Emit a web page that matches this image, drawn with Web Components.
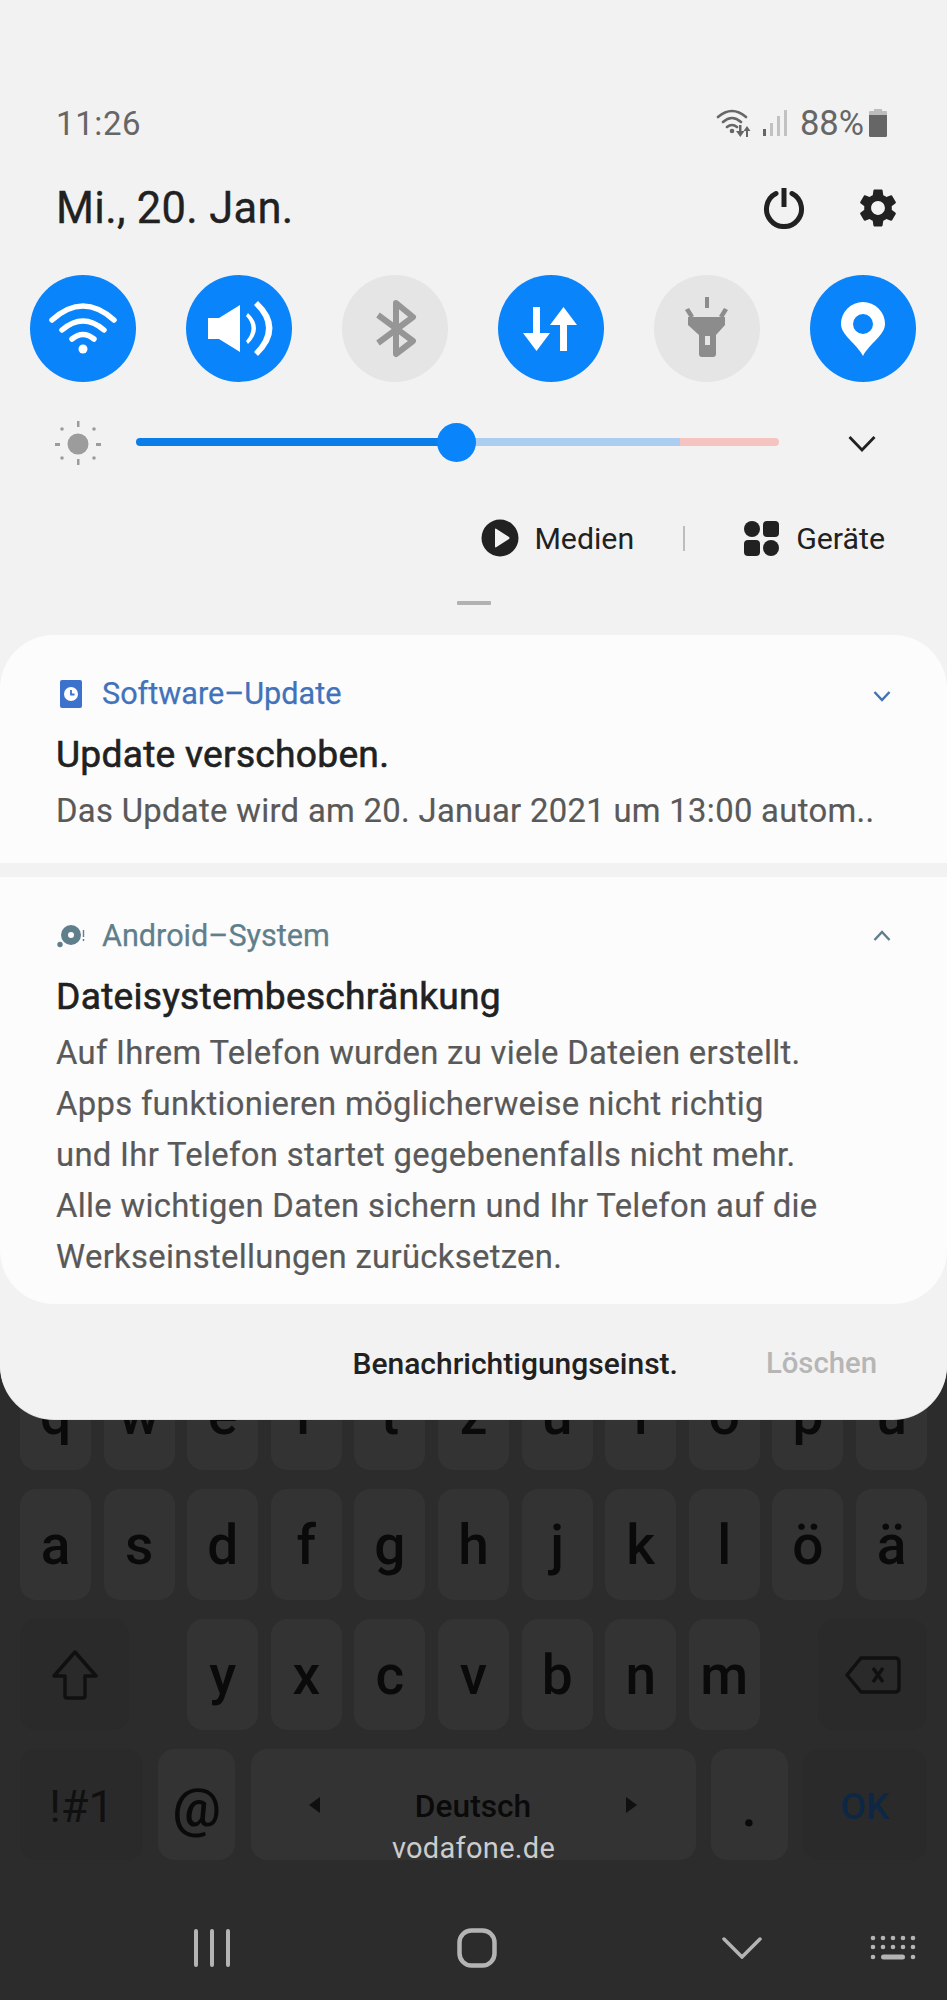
<!DOCTYPE html>
<html lang="de"><head><meta charset="utf-8"><title>Schnelleinstellungen</title>
<style>
html,body{margin:0;padding:0;background:#2c2c2c}
body{font-family:Roboto,"Liberation Sans",sans-serif;width:947px;height:2000px;overflow:hidden}
</style></head><body>
<phone-screen>
  <keyboard-area slot="back"></keyboard-area>
  <quick-panel slot="front">
    <status-bar></status-bar>
    <date-row></date-row>
    <tile-row>
      <qs-tile on><svg viewBox="0 0 106 106" fill="none" stroke="#fff" stroke-width="5.5" stroke-linecap="round"><path d="M22 45Q53 17 84 45M32 55Q53 37 74 55M42 64Q53 55 64 64"/><circle cx="53" cy="74" r="4.5" fill="#fff" stroke="none"/></svg></qs-tile>
      <qs-tile on><svg viewBox="0 0 106 106" fill="#fff"><path d="M22 43H33L54 30V77L33 64H22Z"/><path d="M60 41Q71 53 60 66L62 69Q78 53 62 38Z"/><path d="M68 30Q92 53 68 77L72 81Q101 53 72 26Z"/></svg></qs-tile>
      <qs-tile><svg viewBox="0 0 106 106" fill="none" stroke="#969696" stroke-width="6" stroke-linejoin="round"><path d="M36 40L71 66L54 79V28L71 42L36 68"/></svg></qs-tile>
      <qs-tile on><svg viewBox="0 0 106 106" fill="#fff"><path d="M35 32h7v26h10L38.500 76L25 58h10Z"/><path d="M62 76h7V50h10L65.500 32L52 50h10Z"/></svg></qs-tile>
      <qs-tile><svg viewBox="0 0 106 106" fill="#8c8c8c"><path fill-rule="evenodd" d="M34 42H71V50L62 60V79Q62 82 59 82H48Q45 82 45 79V60L34 50ZM51 61V70H56V61Z"/><path d="M51 22H55V33H51ZM31 35L35 33L40 41L36 43ZM74 35L70 33L65 41L69 43Z"/></svg></qs-tile>
      <qs-tile on><svg viewBox="0 0 106 106" fill="#fff"><path fill-rule="evenodd" d="M53 81C46 68 31 60 31 49A22 22 0 0 1 75 49C75 60 60 68 53 81ZM53 39A10 10 0 1 0 53 59A10 10 0 1 0 53 39Z"/></svg></qs-tile>
    </tile-row>
    <brightness-row></brightness-row>
    <media-row></media-row>
    <drag-handle></drag-handle>
    <notify-card collapsed app="Software–Update" tone="#4172ba" title="Update verschoben.">
      <svg slot="icon" viewBox="0 0 24 28" width="24" height="28"><rect x="1" y="0" width="22" height="28" rx="2" fill="#3c72cc"/><circle cx="12" cy="14" r="7" fill="#fff"/><path d="M12 10V14.500H15.500" fill="none" stroke="#3c72cc" stroke-width="1.800"/></svg>
      <svg slot="chev" style="margin-top:4px" viewBox="0 0 18 12" width="18" height="12" fill="none" stroke="#4172ba" stroke-width="2.500"><path d="M1.500 2L9 10L16.500 2"/></svg>
      Das Update wird am 20. Januar 2021 um 13:00 autom..
    </notify-card>
    <notify-card app="Android–System" tone="#5f7f8c" title="Dateisystembeschränkung">
      <svg slot="icon" viewBox="0 0 32 24" width="32" height="24"><path fill="#5f7f8c" fill-rule="evenodd" d="M15 1A10 10 0 1 0 15 21A10 10 0 1 0 15 1ZM15 8A3 3 0 1 1 15 14A3 3 0 1 1 15 8Z"/><circle cx="4" cy="20.500" r="2.700" fill="#5f7f8c"/><path d="M27.500 6V13M27.500 15V17" stroke="#5f7f8c" stroke-width="1.400"/></svg>
      <svg slot="chev" viewBox="0 0 18 12" width="18" height="12" fill="none" stroke="#5f7f8c" stroke-width="2.500"><path d="M1.500 10L9 2L16.500 10"/></svg>
      Auf Ihrem Telefon wurden zu viele Dateien erstellt.<br>Apps funktionieren möglicherweise nicht richtig<br>und Ihr Telefon startet gegebenenfalls nicht mehr.<br>Alle wichtigen Daten sichern und Ihr Telefon auf die<br>Werkseinstellungen zurücksetzen.
    </notify-card>
    <panel-footer></panel-footer>
  </quick-panel>
</phone-screen>
<script>
function el(name, css, html, after){
  customElements.define(name, class extends HTMLElement{
    connectedCallback(){
      if(this.shadowRoot) return;
      const r=this.attachShadow({mode:'open'});
      r.innerHTML='<style>'+css+'</style>'+(typeof html==='function'?html(this):html);
      if(after) after(r,this);
    }
  });
}
el('phone-screen',`:host{display:grid;width:947px;height:2000px;background:#2c2c2c;color:#212121;overflow:hidden}
 ::slotted(*){grid-area:1/1}`,`<slot name="back"></slot><slot name="front"></slot>`);

el('quick-panel',`:host{display:flex;flex-direction:column;align-self:start;z-index:1;height:1419px;background:#f2f2f2;border-radius:0 0 54px 54px;overflow:hidden;box-shadow:0 1px 0 #e4e4e4}`,`<slot></slot>`);

el('status-bar',`:host{display:flex;align-items:center;height:40px;margin:103px 0 0;padding:0 60px 0 56px;color:#666;font-size:33px}
 .t{flex:1;letter-spacing:.6px}.p{margin:0 5px 0 13px;font-size:34.500px}svg{display:block}`,
 `<span class="t">11:26</span>
 <svg width="38" height="30" viewBox="0 0 38 30" fill="none" stroke="#666" stroke-width="2.600" stroke-linecap="round"><path d="M2 9Q16 -3 30 9M7 14Q16 6 25 14M11 19Q16 15 21 19"/><circle cx="16" cy="23" r="2.300" fill="#666" stroke="none"/><path fill="#666" stroke="none" d="M23 17h2.500v6h3l-4.200 6l-4.300-6h3ZM32 29h-2v-6h-2.500l3.500-5l3.500 5h-2.500Z"/></svg>
 <svg style="margin-left:9px" width="24" height="28" viewBox="0 0 24 28"><rect x="0" y="20" width="3" height="7" fill="#666"/><rect x="7" y="14" width="3" height="13" fill="#c2c2c2"/><rect x="14" y="7" width="3" height="20" fill="#c2c2c2"/><rect x="21" y="1" width="3" height="26" fill="#c2c2c2"/></svg>
 <span class="p">88%</span>
 <svg width="18" height="28" viewBox="0 0 18 28"><path d="M5 0H13V2H17Q18 2 18 3V6H0V3Q0 2 1 2H5Z" fill="#bdbdbd"/><path d="M0 6H18V26.500Q18 28 16.500 28H1.500Q0 28 0 26.500Z" fill="#666"/></svg>`);

el('date-row',`:host{display:flex;align-items:center;height:60px;margin-top:35px;padding:0 46px 0 56px;font-size:43.500px;color:#212121}
 .d{flex:1;letter-spacing:.3px;-webkit-text-stroke:.35px #212121}svg{display:block}`,
 `<span class="d">Mi., 20. Jan.</span>
 <svg width="42" height="42" viewBox="0 0 42 42" fill="none" stroke="#212121" stroke-width="5"><path d="M13 6.500A17.500 17.500 0 1 0 29 6.500" stroke-linecap="round"/><path d="M21 1V20"/></svg>
 <svg style="margin-left:50px" width="46" height="46" viewBox="0 0 24 24" fill="#212121"><path d="M19.140 12.940c.04-.3.06-.61.06-.94 0-.32-.02-.64-.07-.94l2.030-1.580a.49.49 0 0 0 .12-.61l-1.920-3.320a.488.488 0 0 0-.59-.22l-2.390.96c-.5-.38-1.030-.7-1.620-.94l-.36-2.540a.484.484 0 0 0-.48-.41h-3.840c-.24 0-.43.17-.47.41l-.36 2.540c-.59.24-1.130.57-1.620.94l-2.390-.96c-.22-.08-.47 0-.59.22L2.740 8.870c-.12.21-.08.47.12.61l2.030 1.580c-.05.3-.09.63-.09.94s.02.64.07.94l-2.030 1.580a.49.49 0 0 0-.12.61l1.920 3.320c.12.22.37.29.59.22l2.390-.96c.5.38 1.030.7 1.620.94l.36 2.540c.05.24.24.41.48.41h3.840c.24 0 .44-.17.47-.41l.36-2.540c.59-.24 1.130-.56 1.620-.94l2.390.96c.22.08.47 0 .59-.22l1.920-3.320c.12-.22.07-.47-.12-.61l-2.010-1.580zM12 15.600c-1.980 0-3.600-1.620-3.600-3.600s1.620-3.600 3.600-3.600 3.600 1.620 3.600 3.600-1.620 3.600-3.600 3.600z"/></svg>`);

el('tile-row',`:host{display:flex;justify-content:space-between;margin-top:37px;padding:0 31px 0 30px}`,`<slot></slot>`);
el('qs-tile',`:host{display:block;width:106px;height:107px;border-radius:50%;background:#e5e5e5}
 :host([on]){background:#0a84fa} ::slotted(svg){display:block;width:106px;height:106px}`,`<slot></slot>`);

el('brightness-row',`:host{display:flex;align-items:center;height:40px;margin-top:40px;padding:0 71px 0 55px}
 svg{display:block}.track{display:flex;align-items:center;width:643px;height:8px;margin-left:35px;border-radius:4px;position:relative}
 .a{width:320px;height:8px;background:#0a7de8;border-radius:4px 0 0 4px}.b{width:224px;height:8px;background:#abcdf0}.c{flex:1;height:8px;background:#f5c4c1;border-radius:0 4px 4px 0}
 .th{position:absolute;left:301px;top:-15px;width:39px;height:39px;border-radius:50%;background:#0a84fa}.ch{margin-left:auto;margin-top:2px}`,
 `<svg width="46" height="46" viewBox="0 0 46 46" fill="#9c9c9c"><circle cx="23" cy="25" r="10.500"/><rect x="22" y="2" width="2.500" height="6"/><rect x="22" y="40" width="2.500" height="6"/><rect x="0" y="24" width="5" height="3"/><rect x="41" y="24" width="5" height="3"/><circle cx="7" cy="10" r="1.800"/><circle cx="39" cy="10" r="1.800"/><circle cx="7" cy="39" r="1.800"/><circle cx="39" cy="39" r="1.800"/></svg>
 <div class="track"><div class="a"></div><div class="b"></div><div class="c"></div><div class="th"></div></div>
 <svg class="ch" width="28" height="17" viewBox="0 0 28 17" fill="none" stroke="#212121" stroke-width="2.800"><path d="M1.500 2L14 15L26.500 2"/></svg>`);

el('media-row',`:host{display:flex;align-items:center;justify-content:flex-end;height:40px;margin-top:56px;padding-right:62px;font-size:30.300px;color:#212121}
 svg{display:block}.l{margin-left:17px}.m{margin-left:15px}.sep{width:2px;height:25px;background:#bdbdbd;margin:0 59px 0 49px}`,
 `<svg width="38" height="38" viewBox="0 0 38 38"><circle cx="19" cy="19" r="18.500" fill="#212121"/><path d="M14 10.500Q14 9 15.500 10L28 18Q29 19 28 20L15.500 28Q14 29 14 27.500Z" fill="#f2f2f2"/></svg>
 <span class="m">Medien</span><span class="sep"></span>
 <svg width="35" height="35" viewBox="0 0 35 35" fill="#212121"><circle cx="8" cy="8" r="8"/><rect x="19" y="0" width="16" height="16" rx="4"/><rect x="0" y="19" width="16" height="16" rx="4"/><circle cx="27" cy="27" r="8"/></svg>
 <span class="l">Geräte</span>`);

el('drag-handle',`:host{display:block;width:34px;height:4px;margin:43px auto 0;background:#b2b2b2;border-radius:1px}`,``);

customElements.define('notify-card',class extends HTMLElement{
  connectedCallback(){
    if(this.shadowRoot)return;
    const r=this.attachShadow({mode:'open'});
    const c=this.hasAttribute('collapsed');
    r.innerHTML=`<style>:host{display:block;background:#fcfcfc;padding:37px 56px ${c?26:21}px 56px;margin-top:${c?30:14}px;border-radius:${c?'54px 54px 0 0':'0 0 54px 54px'}}
    .h{display:flex;align-items:center;height:43px;color:${this.getAttribute('tone')};font-size:30.600px;-webkit-text-stroke:.25px ${this.getAttribute('tone')}}
    .i{display:flex;align-items:center}.i ::slotted(svg){display:block}.i{margin-left:${c?3:0}px;width:${c?43:46}px}
    .a{flex:1}.c ::slotted(svg){display:block}
    .t{margin-top:14px;height:50px;line-height:50px;font-size:37.200px;letter-spacing:.25px;color:#212121;-webkit-text-stroke:.6px #212121}
    .b{margin-top:7px;font-size:32.800px;letter-spacing:.32px;line-height:51px;color:#595959;white-space:nowrap;-webkit-text-stroke:.2px #595959}</style>
    <div class="h"><span class="i"><slot name="icon"></slot></span><span class="a">${this.getAttribute('app')}</span><span class="c"><slot name="chev"></slot></span></div>
    <div class="t">${this.getAttribute('title')}</div><div class="b"><slot></slot></div>`;
  }
});

el('panel-footer',`:host{display:flex;justify-content:flex-end;align-items:center;height:115px;padding:3px 70px 0 0;font-weight:500;box-sizing:border-box}
 .n{color:#212121;margin-right:88px;font-size:30px}.l{color:#b6b6b6;font-size:29.300px}`,`<span class="n">Benachrichtigungseinst.</span><span class="l">Löschen</span>`);

/* keyboard */
el('kb-key',`:host{display:flex;align-items:center;justify-content:center;box-sizing:border-box;height:111px;background:#333;border-radius:16px;color:#0a0a0a;font-size:55px;font-weight:500;flex:none;width:71px}
 :host([dark]){background:#2a2a2a} svg{display:block}`,`<slot></slot>`);
el('kb-row',`:host{display:flex;gap:12.600px;justify-content:center}`,`<slot></slot>`);

el('keyboard-area',`:host{display:flex;flex-direction:column;align-self:start;margin-top:1359px;padding:0 20px;position:relative}
 .rows{display:flex;flex-direction:column;gap:19px}
 .r3{display:grid;grid-template-columns:109px 1fr 109px}
 .sp{justify-content:space-between}
 .carrier{position:absolute;left:0;right:0;top:472px;line-height:34px;text-align:center;color:#ccc;font-size:29px;letter-spacing:.3px}
 nav{display:flex;align-items:center;height:40px;margin-top:68px}
 nav svg{display:block;flex:none}`,
 ()=>{
  const row=s=>[...s].map(c=>`<kb-key>${c}</kb-key>`).join('');
  return `<div class="rows">
  <kb-row>${row('qwertzuiopü')}</kb-row>
  <kb-row>${row('asdfghjklöä')}</kb-row>
  <div class="r3"><kb-key dark style="width:109px"><svg width="46" height="50" viewBox="0 0 46 50" fill="none" stroke="#101010" stroke-width="3.500" stroke-linejoin="round"><path d="M23 2L44 26H33V46Q33 48 31 48H15Q13 48 13 46V26H2Z"/></svg></kb-key>
   <kb-row>${row('yxcvbnm')}</kb-row>
   <kb-key dark style="width:109px"><svg width="56" height="38" viewBox="0 0 56 38" fill="none" stroke="#101010" stroke-width="3.500" stroke-linejoin="round"><path d="M16 2H50Q54 2 54 6V32Q54 36 50 36H16L2 19Z"/><path d="M28 12L38 26M38 12L28 26"/></svg></kb-key></div>
  <kb-row class="sp">
   <kb-key dark style="width:123px;font-size:45px;font-weight:400;color:#101010;padding-top:4px">!#1</kb-key>
   <kb-key style="width:77px;font-size:54px;padding-top:5px">@</kb-key>
   <kb-key style="width:445px;font-size:31.700px;justify-content:space-between;padding:0 58px"><svg width="11" height="16" viewBox="0 0 11 16"><path d="M11 0V16L0 8Z" fill="#101010"/></svg><span style="margin-top:4px">Deutsch</span><svg width="11" height="16" viewBox="0 0 11 16"><path d="M0 0V16L11 8Z" fill="#101010"/></svg></kb-key>
   <kb-key style="width:77px;font-size:55px"><span style="margin-top:4px">.</span></kb-key>
   <kb-key dark style="width:124px;font-size:37px;color:#0d2744;padding-top:3px">OK</kb-key>
  </kb-row></div>
  <div class="carrier">vodafone.de</div>
  <nav>
   <svg style="margin-left:173px" width="38" height="38" viewBox="0 0 38 38" fill="none" stroke="#b4b4b4" stroke-width="4" stroke-linecap="round"><path d="M3 2V36M19 2V36M35 2V36"/></svg>
   <svg style="margin-left:226px" width="40" height="40" viewBox="0 0 40 40" fill="none" stroke="#b4b4b4" stroke-width="4.500"><rect x="2.500" y="2.500" width="35" height="35" rx="12"/></svg>
   <svg style="margin-left:225px" width="40" height="22" viewBox="0 0 40 22" fill="none" stroke="#b4b4b4" stroke-width="3.500" stroke-linecap="round"><path d="M2 2L20 20L38 2"/></svg>
   <svg style="margin-left:108px" width="46" height="26" viewBox="0 0 46 26" fill="#b4b4b4"><circle cx="3" cy="3" r="2.300"/><circle cx="13" cy="3" r="2.300"/><circle cx="23" cy="3" r="2.300"/><circle cx="33" cy="3" r="2.300"/><circle cx="43" cy="3" r="2.300"/><circle cx="3" cy="12" r="2.300"/><circle cx="13" cy="12" r="2.300"/><circle cx="23" cy="12" r="2.300"/><circle cx="33" cy="12" r="2.300"/><circle cx="43" cy="12" r="2.300"/><circle cx="3" cy="22" r="2.300"/><circle cx="43" cy="22" r="2.300"/><rect x="11" y="19.500" width="24" height="5" rx="2.500"/></svg>
  </nav>`;
 });
</script>
</body></html>
